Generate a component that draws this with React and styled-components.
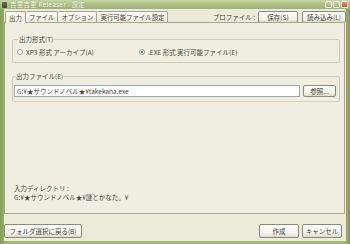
import styled, { createGlobalStyle } from "styled-components";

const GlobalStyle = createGlobalStyle`
  html, body {
    margin: 0;
    padding: 0;
    background: #ffffff;
  }
  body {
    font-family: "Noto Sans CJK JP", "DejaVu Sans", sans-serif;
  }
  * {
    box-sizing: border-box;
  }
`;

const Frame = styled.div`
  width: 350px;
  height: 244px;
  display: flex;
  flex-direction: column;
  background: linear-gradient(90deg, #869c5c 0%, #a3b77c 2%, #a3b77c 98%, #869c5c 100%);
  font-size: 6.5px;
  color: #45453a;
`;

const TitleBar = styled.div`
  height: 9px;
  display: flex;
  align-items: center;
  padding: 0 2px;
  background: linear-gradient(#c6d3a2, #a9bc82 60%, #9db178);
  color: #fbfcf4;
  font-size: 6.5px;
  line-height: 9px;
  letter-spacing: 0.2px;
`;

const AppIcon = styled.span`
  width: 5px;
  height: 6px;
  margin-right: 3px;
  background: linear-gradient(#6a6a5a, #4a4a3a);
  border-radius: 1px;
`;

const TitleText = styled.span`
  flex: 1;
  text-shadow: 0 0 1px #7f8f5a;
`;

const CaptionButtons = styled.div`
  display: flex;
  gap: 1px;
`;

const CaptionButton = styled.span`
  width: 7px;
  height: 7px;
  border: 1px solid #f0f2e6;
  border-radius: 1px;
  background: ${(p) =>
    p.$close
      ? "linear-gradient(#e88a6a, #c9563a)"
      : "linear-gradient(#c8d3a6, #9fb07a)"};
`;

const Client = styled.div`
  flex: 1;
  margin: 0 4px 3px 4px;
  background: #ecead9;
  display: flex;
  flex-direction: column;
`;

const TabRow = styled.div`
  height: 13px;
  display: flex;
  align-items: flex-end;
  padding-left: 1px;
`;

const Tab = styled.div`
  height: ${(p) => (p.$active ? "12px" : "11px")};
  padding: 0 3px;
  display: flex;
  align-items: center;
  border: 1px solid #a8a690;
  border-bottom: none;
  border-left: ${(p) => (p.$active ? "1px solid #a8a690" : "none")};
  border-radius: 2px 2px 0 0;
  background: ${(p) => (p.$active ? "#f7f6ee" : "linear-gradient(#fbfbf7, #ecebe0)")};
  margin-bottom: ${(p) => (p.$active ? "-1px" : "0")};
  position: relative;
  z-index: ${(p) => (p.$active ? 1 : 0)};
  white-space: nowrap;
  letter-spacing: -0.1px;
`;

const Spacer = styled.div`
  flex: 1;
`;

const ProfileLabel = styled.span`
  align-self: center;
  margin: 2px 3px 0 0;
  white-space: nowrap;
`;

const Button = styled.button`
  height: ${(p) => p.$h || 12}px;
  width: ${(p) => p.$w}px;
  padding: 0;
  border: 1px solid #8a8a78;
  border-radius: 2px;
  background: linear-gradient(#fefefc, #f2f1ea 70%, #dcdacb);
  font-family: inherit;
  font-size: 6.5px;
  color: #45453a;
  display: flex;
  align-items: center;
  justify-content: center;
  white-space: nowrap;
`;

const HeaderButtons = styled.div`
  display: flex;
  gap: 4px;
  align-self: center;
  margin-top: 2px;
`;

const Panel = styled.div`
  height: 192px;
  margin: 0 1px 0 0;
  border: 1px solid #a8a690;
  background: #efeee0;
  display: flex;
  flex-direction: column;
  padding: 13px 4px 0 7px;
`;

const Group = styled.fieldset`
  margin: 0 0 10px 0;
  padding: ${(p) => p.$pad};
  border: 1px solid #d2d0bd;
  border-radius: 2px;
  min-width: 0;
`;

const Legend = styled.legend`
  padding: 0 1px;
  margin-left: 1px;
  font-size: 6.5px;
  line-height: 7px;
`;

const RadioRow = styled.div`
  display: flex;
  align-items: center;
`;

const RadioItem = styled.label`
  display: flex;
  align-items: center;
  gap: 3px;
  width: ${(p) => p.$w}px;
  white-space: nowrap;
`;

const RadioDot = styled.span`
  width: 6px;
  height: 6px;
  border-radius: 50%;
  border: 1px solid #8f9a9a;
  background: #fafaf6;
  display: flex;
  align-items: center;
  justify-content: center;
  &::after {
    content: "";
    width: 2px;
    height: 2px;
    border-radius: 50%;
    background: ${(p) => (p.$on ? "#3a5a2a" : "transparent")};
  }
`;

const FileRow = styled.div`
  display: flex;
  align-items: center;
  gap: 3px;
`;

const TextInput = styled.div`
  flex: 1;
  height: 12px;
  border: 1px solid #9aa8b4;
  background: #ffffff;
  padding-left: 2px;
  display: flex;
  align-items: center;
  white-space: nowrap;
`;

const Info = styled.div`
  margin-top: auto;
  margin-bottom: 11px;
  padding-left: 2px;
  line-height: 9px;
`;

const BottomRow = styled.div`
  display: flex;
  align-items: center;
  padding: 10px 4px 0 0;
  gap: 3px;
`;

export default function App() {
  return (
    <>
      <GlobalStyle />
      <Frame>
        <TitleBar>
          <AppIcon />
          <TitleText>吉里吉里 Releaser - 設定</TitleText>
          <CaptionButtons>
            <CaptionButton />
            <CaptionButton />
            <CaptionButton $close />
          </CaptionButtons>
        </TitleBar>
        <Client>
          <TabRow>
            <Tab $active>出力</Tab>
            <Tab>ファイル</Tab>
            <Tab>オプション</Tab>
            <Tab>実行可能ファイル設定</Tab>
            <Spacer />
            <ProfileLabel>プロファイル :</ProfileLabel>
            <HeaderButtons>
              <Button $w={40}>保存(S)</Button>
              <Button $w={44}>読み込み(L)</Button>
            </HeaderButtons>
          </TabRow>
          <Panel>
            <Group $pad="4px 4px 5px 4px">
              <Legend>出力形式(T)</Legend>
              <RadioRow>
                <RadioItem $w={122}>
                  <RadioDot />
                  XP3 形式 アーカイブ(A)
                </RadioItem>
                <RadioItem>
                  <RadioDot $on />
                  .EXE 形式 実行可能ファイル(E)
                </RadioItem>
              </RadioRow>
            </Group>
            <Group $pad="5px 3px 4px 1px">
              <Legend>出力ファイル(E)</Legend>
              <FileRow>
                <TextInput>G:¥★サウンドノベル★¥takekana.exe</TextInput>
                <Button $w={33} $h={12}>参照...</Button>
              </FileRow>
            </Group>
            <Info>
              入力ディレクトリ :
              <br />
              G:¥★サウンドノベル★¥謎とかなた。¥
            </Info>
          </Panel>
          <BottomRow>
            <Button $w={78} $h={14}>フォルダ選択に戻る(B)</Button>
            <Spacer />
            <Button $w={40} $h={14}>作成</Button>
            <Button $w={40} $h={14}>キャンセル</Button>
          </BottomRow>
        </Client>
      </Frame>
    </>
  );
}
